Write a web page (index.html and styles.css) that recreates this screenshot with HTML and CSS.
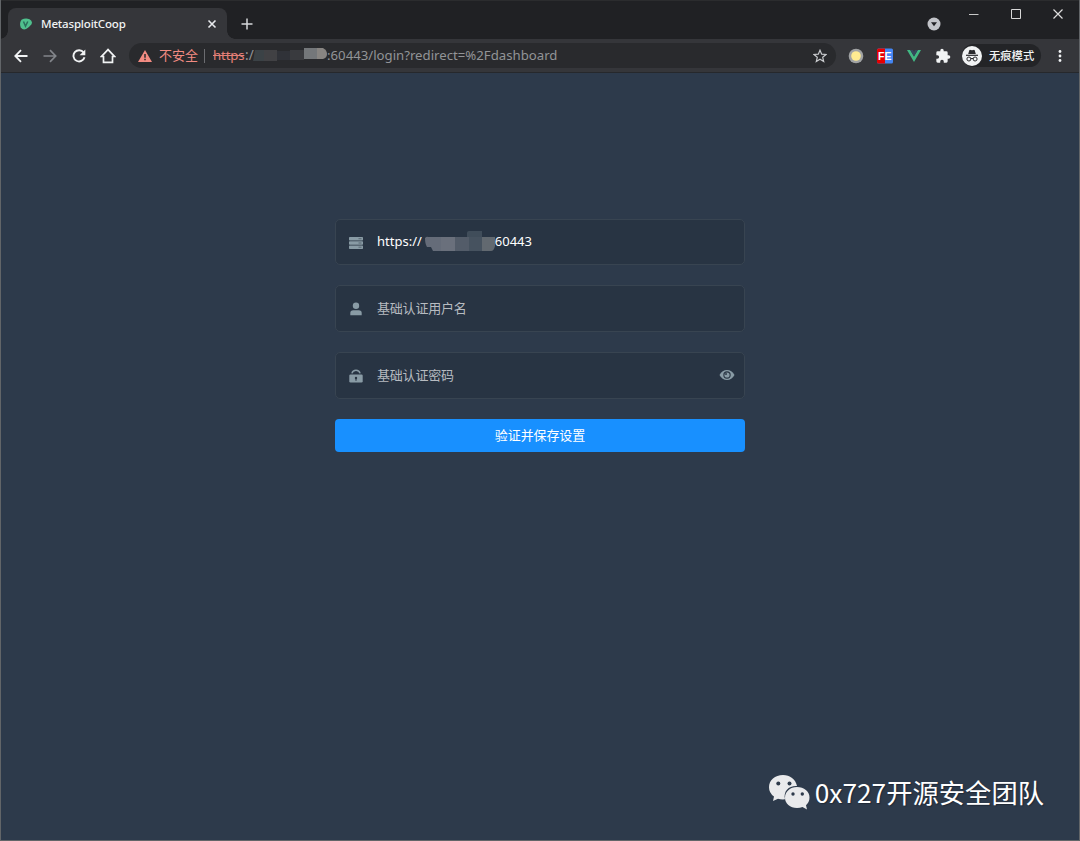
FILE: index.html
```html
<!DOCTYPE html>
<html lang="zh-CN">
<head>
<meta charset="utf-8">
<title>MetasploitCoop</title>
<link rel="stylesheet" href="styles.css">
</head>
<body>
<div class="window">
  <header class="tabstrip">
    <div class="tab">
      <svg class="favicon" width="14" height="14" viewBox="0 0 14 14"><path d="M2.500 2.800Q6.500 .6 10.500 2.200Q14.200 4.200 12.300 7.600Q10.500 10 7.500 11.800Q4 13.500 1.800 10.500Q0 6 2.500 2.800Z" fill="#4fc08d"/><path d="M4.500 4.500L6.500 9.200L8.800 4.500" fill="none" stroke="#2c6f5c" stroke-width="1.500"/></svg>
      <span class="tab-title">MetasploitCoop</span>
      <svg width="10" height="10" viewBox="0 0 10 10"><path d="M1.500 1.500l7 7m0-7l-7 7" stroke="#e8eaed" stroke-width="1.600"/></svg>
    </div>
    <svg class="new-tab" width="12" height="12" viewBox="0 0 12 12"><path d="M6 .5v11M.5 6h11" stroke="#d5d7da" stroke-width="1.500"/></svg>
    <svg class="tab-search" width="14" height="14" viewBox="0 0 14 14"><circle cx="7" cy="7" r="6.500" fill="#c2c4c9"/><path d="M4 5.200h6L7 9.200z" fill="#202124"/></svg>
    <div class="controls">
      <svg width="10" height="11" viewBox="0 0 10 11"><path d="M0 6.500h9.500" stroke="#c8c8c8"/></svg>
      <svg width="10" height="11" viewBox="0 0 10 11"><path d="M.5 1.500h9v9h-9z" fill="none" stroke="#d8d8d8"/></svg>
      <svg width="10" height="11" viewBox="0 0 10 11"><path d="M.5 1.500l9 9m0-9l-9 9" stroke="#dedede" stroke-width="1.200"/></svg>
    </div>
  </header>
  <nav class="toolbar">
    <div class="nav-icons">
      <svg width="14" height="14" viewBox="0 0 14 14"><path d="M13.500 7H1.500M7 1.200L1.300 7L7 12.800" fill="none" stroke="#f1f3f4" stroke-width="1.800"/></svg>
      <svg width="14" height="14" viewBox="0 0 14 14"><path d="M.5 7h12M7 1.200L12.700 7L7 12.800" fill="none" stroke="#82858a" stroke-width="1.700"/></svg>
      <svg width="14" height="14" viewBox="0 0 14 14"><path d="M11.600 3.500A5.600 5.600 0 1 0 12.500 8.200" fill="none" stroke="#f1f3f4" stroke-width="1.900"/><path d="M13.300.5v5.700H7.600z" fill="#f1f3f4"/></svg>
      <svg width="16" height="16" viewBox="0 0 16 16"><path d="M8 1.600L1.500 8.500H3.500V14.300H12.500V8.500H14.500Z" fill="none" stroke="#f1f3f4" stroke-width="1.700"/></svg>
    </div>
    <div class="omnibox">
      <svg class="warning" width="14" height="12" viewBox="0 0 14 12"><path d="M7 0L14 12H0z" fill="#f28b82"/><path d="M7 4v3.700M7 8.700v1.500" stroke="#292a2d" stroke-width="1.500"/></svg>
      <span class="unsafe">不安全</span>
      <span class="divider"></span>
      <span class="scheme">https</span><span class="slash">:/</span>
      <svg class="mask" width="76" height="16" viewBox="0 0 76 16"><path d="M2 3h9v11H0z" fill="#3b4246"/><path d="M11 3h13v11H11z" fill="#414144"/><path d="M24 4h13v9H24z" fill="#303238"/><path d="M37 3h14v10H37z" fill="#393a3e"/><path d="M51 1h13v11H51z" fill="#74777a"/><path d="M64 1h6q4 2 4 6t-4 5h-6z" fill="#888582"/></svg>
      <span class="path">:60443/login?redirect=%2Fdashboard</span>
      <svg class="star" width="14" height="14" viewBox="0 0 14 14"><path d="M7 1.200L8.700 5.200L13 5.500L9.700 8.300L10.700 12.500L7 10.200L3.300 12.500L4.300 8.300L1 5.500L5.300 5.200Z" fill="none" stroke="#c9cbce" stroke-width="1.200"/></svg>
    </div>
    <div class="extensions">
      <svg width="16" height="16" viewBox="0 0 16 16"><circle cx="8" cy="8" r="7.300" fill="#a1a3a4"/><circle cx="8" cy="8" r="4.800" fill="#ffec91"/></svg>
      <svg width="16" height="16" viewBox="0 0 16 16"><rect width="16" height="15" y=".5" rx="1.500" fill="#4486f4"/><path d="M1.500.5H8v15H1.500Q0 15.500 0 14V2Q0 .5 1.500.5" fill="#e60000"/><text class="fe" x="1" y="12">FE</text></svg>
      <svg width="16" height="16" viewBox="0 0 16 16"><path d="M1 2h3.200L8 8.600L11.800 2H15L8 14z" fill="#41b883"/><path d="M4.200 2H7l1 1.800L9 2h2.800L8 8.600z" fill="#35495e"/></svg>
      <svg width="16" height="16" viewBox="0 0 24 24"><path d="M20.500 11H19V7a2 2 0 0 0-2-2h-4V3.500a2.500 2.500 0 0 0-5 0V5H4a2 2 0 0 0-2 2v3.800h1.500a2.700 2.700 0 0 1 0 5.400H2V20a2 2 0 0 0 2 2h3.800v-1.500a2.700 2.700 0 0 1 5.400 0V22H17a2 2 0 0 0 2-2v-4h1.500a2.500 2.500 0 0 0 0-5z" fill="#f1f3f4"/></svg>
    </div>
    <div class="incognito">
      <svg width="20" height="20" viewBox="0 0 20 20"><circle cx="10" cy="10" r="10" fill="#f1f3f4"/><path d="M6.200 8L7.300 4.200Q7.700 3.600 8.500 3.900L10 4.300L11.500 3.900Q12.300 3.600 12.700 4.200L13.800 8z" fill="#292a2d"/><path d="M4 9.300h12" stroke="#292a2d" stroke-width="1.200"/><g fill="none" stroke="#292a2d"><circle cx="6.900" cy="13" r="2"/><circle cx="13.100" cy="13" r="2"/><path d="M8.900 12.700q1.100-.7 2.200 0"/></g></svg>
      <span>无痕模式</span>
    </div>
    <svg class="menu" width="4" height="14" viewBox="0 0 4 14"><g fill="#f1f3f4"><circle cx="2" cy="2.500" r="1.400"/><circle cx="2" cy="7" r="1.400"/><circle cx="2" cy="11.500" r="1.400"/></g></svg>
  </nav>
  <main class="page">
    <form class="form">
      <div class="field first">
        <svg class="icon" width="14" height="14" viewBox="0 0 14 14"><g fill="#899ba5"><rect y="1" width="14" height="3.500" rx=".7"/><rect y="5.300" width="14" height="3.400" rx=".7"/><rect y="9.500" width="14" height="3.500" rx=".7"/></g><path d="M9.500 2.700h3M9.500 7h3M9.500 11.200h3" stroke="#4c5b66" stroke-width=".8"/></svg>
        <span class="value">https://</span>
        <svg class="host-mask" width="72" height="22" viewBox="0 0 72 22"><path d="M1 8Q3 6 4 7h13v14H9l-2-4H3q-2-3-2-9" fill="#656c79"/><path d="M17 7h14v14H17z" fill="#6a707c"/><path d="M31 7h14v14H31z" fill="#535c69"/><path d="M45 1h13v20H45z" fill="#46525f"/><path d="M43 3q0-2 2-2h13v6H43z" fill="#404d5a"/><path d="M58 7h13v9q-1 5-4 5h-9z" fill="#626970"/></svg>
        <span class="value port">60443</span>
      </div>
      <div class="field second">
        <svg class="icon" width="14" height="14" viewBox="0 0 14 14"><circle cx="7" cy="3.800" r="3.200" fill="#899ba5"/><path d="M1.300 13.300V11q0-2.700 3-2.700h5.400q3 0 3 2.700v2.300z" fill="#899ba5"/></svg>
        <span class="hint">基础认证用户名</span>
      </div>
      <div class="field third">
        <svg class="icon" width="14" height="14" viewBox="0 0 14 14"><path d="M2.900 4.300Q3.700 1.200 7 1.200T11.100 4.300" fill="none" stroke="#899ba5" stroke-width="1.400"/><rect x=".3" y="5.600" width="13.400" height="7.900" rx="1.200" fill="#899ba5"/><circle cx="7" cy="9" r="1.200" fill="#283442"/><path d="M7 9v2.800" stroke="#283442"/></svg>
        <span class="hint">基础认证密码</span>
        <svg class="eye" width="16" height="12" viewBox="0 0 16 12"><path d="M.5 6Q3.200 1 8 1t7.500 5Q12.800 11 8 11T.5 6" fill="#899ba5"/><circle cx="8" cy="6" r="3.700" fill="#283442"/><circle cx="8" cy="6" r="2.600" fill="#899ba5"/><path d="M8 6V3.500A2.500 2.500 0 0 0 5.500 6z" fill="#44525f"/></svg>
      </div>
      <button class="submit" type="button">验证并保存设置</button>
    </form>
    <div class="watermark">
      <svg width="42" height="37" viewBox="0 0 42 37"><path d="M15 1C7 1 1 6.200 1 13.200Q1 19 6 22.500L5 27L10 24.700Q13 25.700 17 25.300C15 17 21 11.500 29 12C27.500 5 22 1 15 1Z" fill="#e9eaec"/><path d="M29 13C22 13 17 17.800 17 23.700S22 34 29 34Q32 34 34.500 33L39 35.500L38 31.300Q41.500 28 41.500 23.500C41.500 17.500 36 13 29 13Z" fill="#e9eaec"/><g fill="#2d3a4b"><circle cx="10.300" cy="9.600" r="2"/><circle cx="21.500" cy="9.600" r="2"/><circle cx="25" cy="20" r="1.700"/><circle cx="34.300" cy="20" r="1.700"/></g></svg>
      <span>0x727开源安全团队</span>
    </div>
  </main>
</div>
</body>
</html>
```
FILE: styles.css
```css
* { box-sizing: border-box; }
body { margin: 0; font-family: "Noto Sans", "Noto Sans CJK SC", sans-serif; }
svg { display: block; flex: none; }
span { white-space: nowrap; }
.window { width: 1080px; height: 841px; border: 1px solid #626568; border-top: 0; display: flex; flex-direction: column; overflow: hidden; background: #2d3a4b; }
.tabstrip { height: 39px; background: #202124; display: flex; padding-left: 7px; border-top: 1px solid #2b2c2e; }
.tab { position: relative; width: 219px; height: 31px; margin-top: 7px; padding: 0 10px 0 11px; display: flex; align-items: center; background: #35363a; border-radius: 8px 8px 0 0; }
.tab::before, .tab::after { content: ""; position: absolute; bottom: 0; width: 8px; height: 8px; }
.tab::before { left: -8px; background: radial-gradient(circle at 0 0, transparent 7.5px, #35363a 8px); }
.tab::after { right: -8px; background: radial-gradient(circle at 100% 0, transparent 7.5px, #35363a 8px); }
.tab-title { flex: 1; margin-left: 8px; font: 500 11.5px/18px "Noto Sans", sans-serif; letter-spacing: -.17px; color: #f1f3f4; }
.new-tab { margin: 17px 0 0 14px; }
.tab-search { margin: 16px 0 0 auto; }
.controls { display: flex; gap: 32px; margin: 7px 16px 0 28px; }
.toolbar { height: 34px; background: #35363a; border-bottom: 1px solid #26282c; display: flex; align-items: center; flex: none; }
.nav-icons { display: flex; align-items: center; gap: 15px; padding-left: 13px; width: 128px; }
.nav-icons svg:last-child { margin-left: -1px; }
.omnibox { width: 707px; height: 25px; border-radius: 13px; background: #292a2d; display: flex; align-items: center; padding: 0 9px; font-size: 13.5px; color: #929497; }
.unsafe { margin-left: 7px; padding-bottom: 2px; font: 13px/20px "Noto Sans CJK SC", sans-serif; color: #f28b82; }
.divider { width: 1px; height: 14px; margin: 0 8px 0 6px; background: #6b6c70; }
.scheme, .slash, .path { padding-bottom: 2px; }
.scheme { width: 32px; color: #e58078; font-size: 13.2px; letter-spacing: -.15px; text-decoration: line-through; }
.slash { width: 8px; }
.mask { margin: 0 -2px 1px 0; }
.path { width: 232px; font-size: 13.2px; }
.star { margin-left: auto; }
.extensions { display: flex; gap: 13px; margin-left: 12px; }
.fe { font: 700 10.5px "Liberation Sans", sans-serif; fill: #fff; }
.incognito { display: flex; align-items: center; gap: 7px; width: 79px; height: 23px; margin-left: 11px; border-radius: 12px; background: #232427; color: #f1f3f4; font: 500 11.3px/18px "Noto Sans CJK SC", sans-serif; }
.incognito span { padding-bottom: 1px; }
.menu { margin-left: 17px; }
.page { flex: 1; display: flex; flex-direction: column; align-items: center; padding-top: 146px; background: #2d3a4b; }
.form { width: 410px; display: flex; flex-direction: column; }
.field { height: 47px; margin-bottom: 20px; border: 1px solid #384451; border-radius: 5px; background: #283443; display: flex; align-items: center; padding: 0 9px 0 13px; }
.field.first { height: 46px; }
.icon { margin: 1px 14px 0 0; }
.value { padding-bottom: 2px; font-size: 13px; color: #fff; line-height: 20px; }
.host-mask { margin: 0 -1px 2px 2px; }
.hint { padding-bottom: 2px; font: 13px/20px "Noto Sans CJK SC", sans-serif; color: #b7bbc0; letter-spacing: -.2px; }
.eye { margin: 0 0 1px auto; }
.submit { height: 33px; padding: 0 0 2px; border: 0; border-radius: 4px; background: #1890ff; color: #fff; font: 13px/31px "Noto Sans CJK SC", sans-serif; letter-spacing: -.1px; }
.watermark { display: flex; align-items: center; gap: 5px; margin: auto 35px 28px auto; color: #fff; font: 26.3px/40px "Noto Sans CJK SC", sans-serif; text-shadow: 1px 1px 1px #202936; }
```
